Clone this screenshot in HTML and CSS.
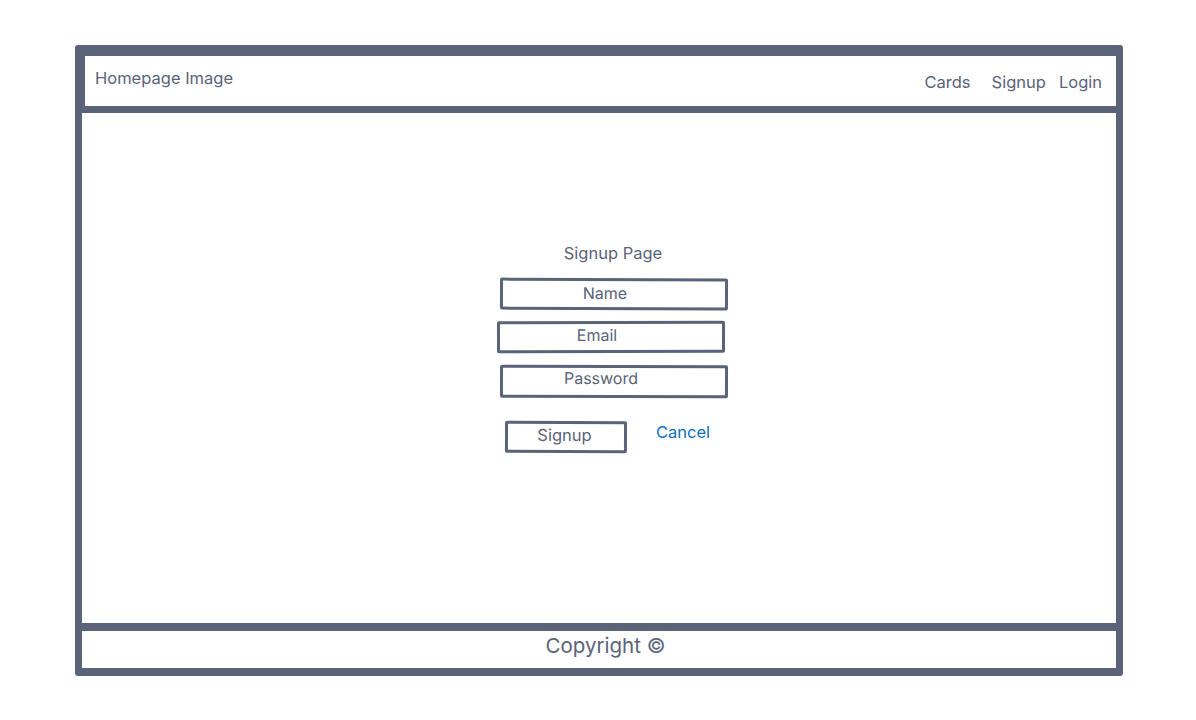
FILE: index.html
```html
<!DOCTYPE html>
<html lang="en">
<head>
	<meta charset="UTF-8">
	<title>Signup Page</title>
	<link rel="stylesheet" href="styles.css">
</head>
<body>
<div class="frame">
	<header class="top">
		<span class="brand">Homepage Image</span>
		<nav class="nav">
			<a class="cards">Cards</a>
			<a class="signup">Signup</a>
			<a class="login">Login</a>
		</nav>
	</header>

	<main class="content">
		<div class="form">
			<div class="title">Signup Page</div>
			<div class="field name">Name</div>
			<div class="field email">Email</div>
			<div class="field password">Password</div>
			<div class="actions">
				<div class="btn">Signup</div>
				<a class="cancel">Cancel</a>
			</div>
		</div>
	</main>

	<footer class="bottom">Copyright &copy;</footer>
</div>
</body>
</html>
```

FILE: styles.css
```css
body{
	margin: 0;
	background: #fff;
	font-family: Inter, "Liberation Sans", sans-serif;
	color: #5a6378;
}

.frame{
	box-sizing: border-box;
	width: 1048px;
	height: 631px;
	margin: 45px 0 0 75px;
	border: 7px solid #5a6378;
	border-bottom-width: 8px;
	border-radius: 3px;
	display: flex;
	flex-direction: column;
}

/* header bar */
.top{
	height: 50px;
	border-top: 4px solid #5a6378;
	border-left: 3px solid #5a6378;
	border-bottom: 7px solid #5a6378;
	display: flex;
	justify-content: space-between;
	align-items: flex-start;
	padding: 0 14px 0 10px;
}

.brand{
	font-size: 16.5px;
	margin-top: 12px;
}

.nav{
	display: flex;
	font-size: 16.5px;
	margin-top: 16px;
}

.nav a{
	color: #5a6378;
}

.cards{ margin-right: 21px; }
.signup{ margin-right: 13px; }

/* signup form */
.content{
	flex: 1;
	padding: 130px 0 0 415px;
}

.form{
	width: 232px;
	display: flex;
	flex-direction: column;
}

.title{
	text-align: center;
	font-size: 16.5px;
	line-height: 20px;
	margin: 0 0 15px 0;
}

.field{
	box-sizing: border-box;
	width: 228px;
	height: 32px;
	border: 3px solid #5a6378;
	border-radius: 2px;
	font-size: 16px;
	line-height: 25px;
	text-align: center;
}

.name{ margin-left: 3px; padding-right: 18px; transform: rotate(0.2deg); }
.email{ margin-top: 11px; padding-right: 28px; line-height: 22px; transform: rotate(-0.1deg); }
.password{ margin-top: 12px; margin-left: 3px; height: 33px; padding-right: 26px; line-height: 20px; transform: rotate(0.15deg); }

.actions{
	display: flex;
	align-items: flex-start;
	margin-top: 23px;
	margin-left: 8px;
}

.btn{
	box-sizing: border-box;
	width: 122px;
	height: 32px;
	border: 3px solid #5a6378;
	border-radius: 2px;
	font-size: 16.5px;
	line-height: 22px;
	text-align: center;
	padding-right: 3px;
	transform: rotate(0.2deg);
}

.cancel{
	color: #0b6fbf;
	font-size: 16.5px;
	margin: 1px 0 0 29px;
}

.bottom{
	height: 37px;
	border-top: 8px solid #5a6378;
	text-align: center;
	font-size: 20.5px;
	line-height: 30px;
	padding-left: 13px;
}
```
